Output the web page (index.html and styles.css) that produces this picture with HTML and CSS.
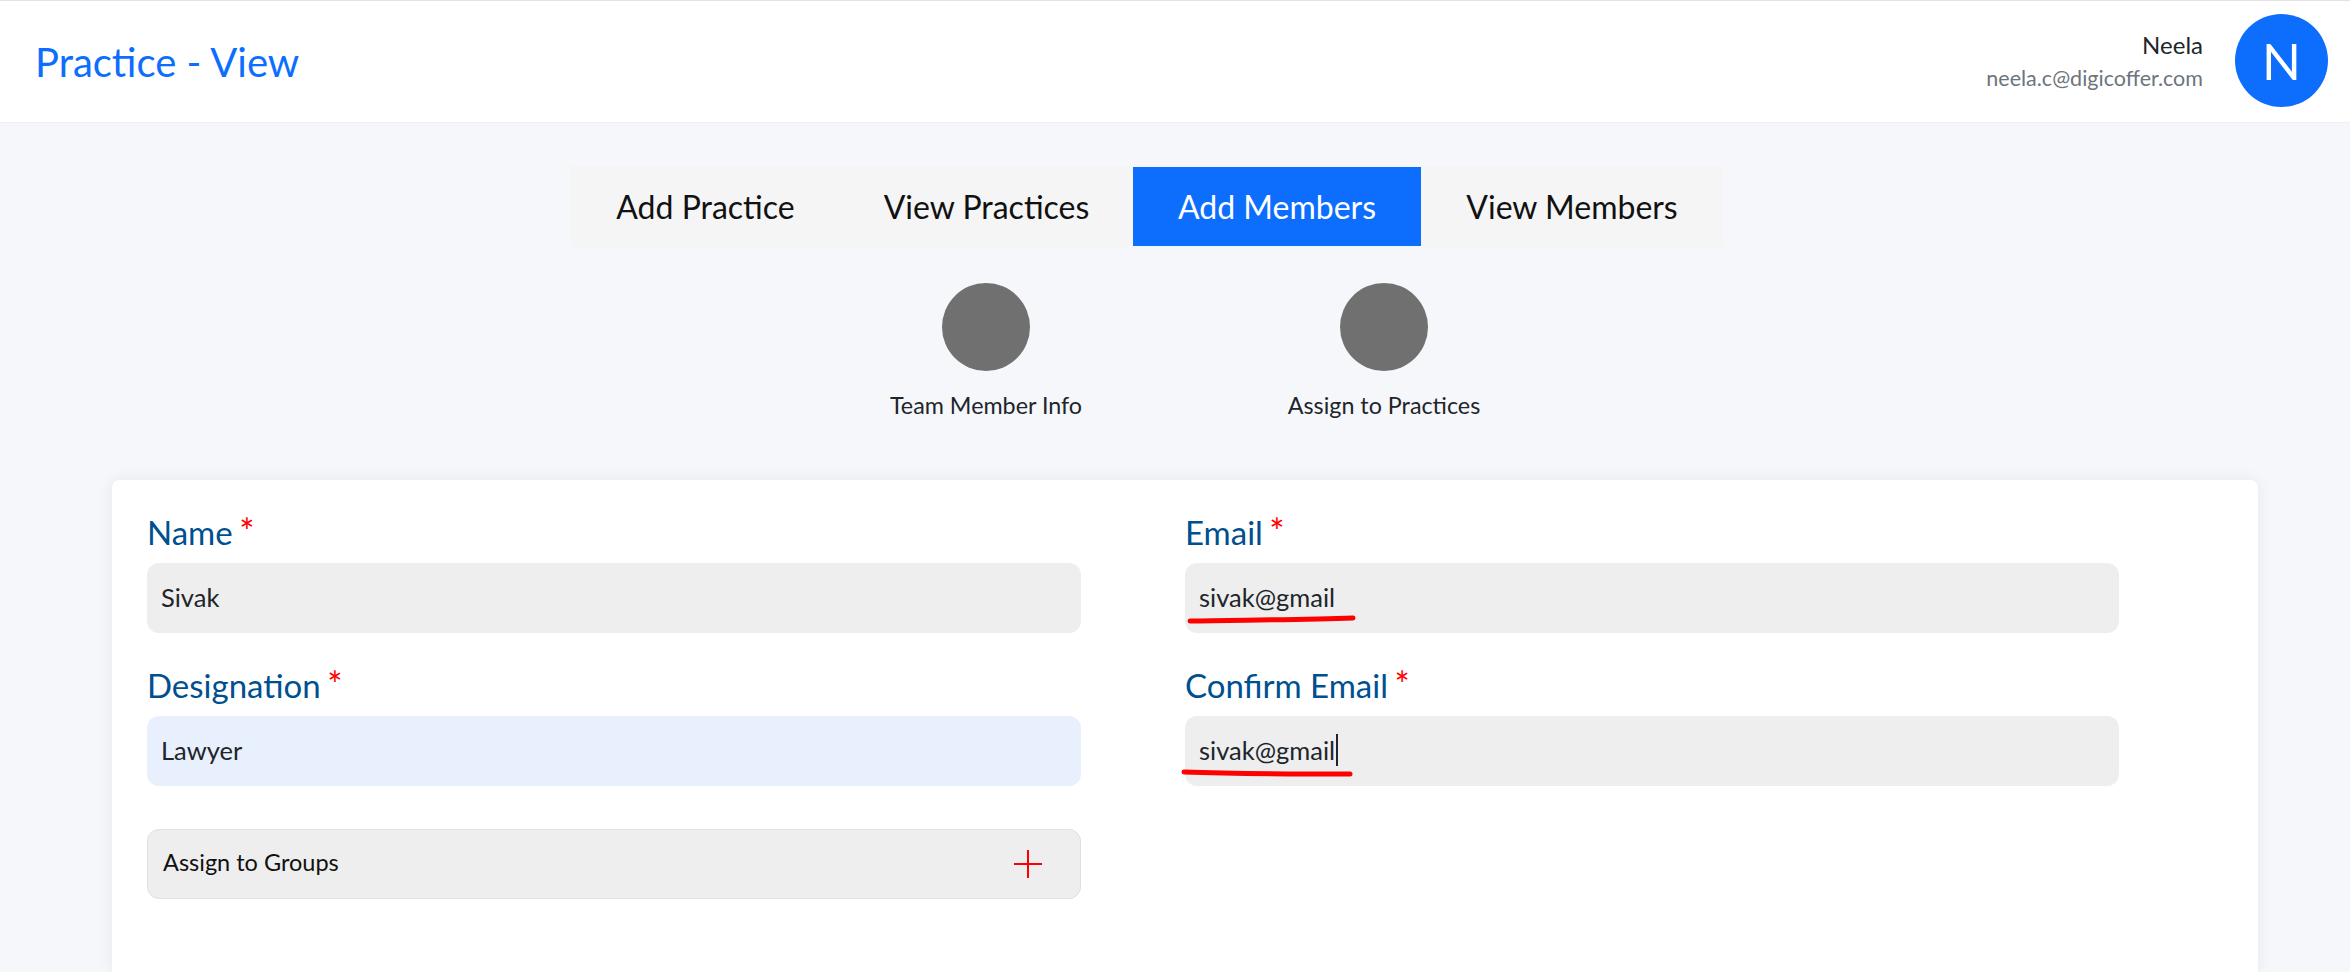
FILE: index.html
```html
<!DOCTYPE html>
<html lang="en">
<head>
<meta charset="utf-8">
<title>Practice - View</title>
<link rel="stylesheet" href="styles.css">
</head>
<body>
<header class="topbar">
  <h1 class="title">Practice - View</h1>
  <div class="user">
    <div class="user-text">
      <div class="user-name">Neela</div>
      <div class="user-mail">neela.c@digicoffer.com</div>
    </div>
    <div class="avatar">N</div>
  </div>
</header>
<main class="page">
  <nav class="tabs">
    <a class="tab">Add Practice</a>
    <a class="tab">View Practices</a>
    <a class="tab tab-active">Add Members</a>
    <a class="tab">View Members</a>
  </nav>
  <div class="steps">
    <div class="step"><span class="step-dot"></span><span class="step-label">Team Member Info</span></div>
    <div class="step"><span class="step-dot"></span><span class="step-label">Assign to Practices</span></div>
  </div>
  <section class="card">
    <div class="form-grid">
      <div class="field">
        <label class="label">Name <span class="req">*</span></label>
        <div class="input">Sivak</div>
      </div>
      <div class="field">
        <label class="label">Email <span class="req">*</span></label>
        <div class="input">sivak@gmail</div>
      </div>
      <div class="field">
        <label class="label">Designation <span class="req">*</span></label>
        <div class="input input-filled">Lawyer</div>
      </div>
      <div class="field">
        <label class="label">Confirm Email <span class="req">*</span></label>
        <div class="input">sivak@gmail<span class="caret"></span></div>
      </div>
      <div class="assign">
        <span class="assign-text">Assign to Groups</span>
        <svg class="plus" width="28" height="28" viewBox="0 0 28 28"><path d="M14 0V28M0 14H28" stroke="#f00" stroke-width="2" fill="none"/></svg>
      </div>
    </div>
  </section>
</main>
<svg class="scribble" width="2350" height="972" viewBox="0 0 2350 972">
  <path d="M1190 621 C1240 620 1300 620 1353 618" stroke="#f00" stroke-width="5" stroke-linecap="round" fill="none"/>
  <path d="M1184 772 C1240 774 1300 774 1350 774" stroke="#f00" stroke-width="5" stroke-linecap="round" fill="none"/>
</svg>
</body>
</html>
```
FILE: styles.css
```css
* { box-sizing: border-box; }
html, body { margin: 0; height: 100%; }
body {
  position: relative;
  height: 972px;
  overflow: hidden;
  background: #f5f7fb;
  font-family: "Lato", "Noto Sans", sans-serif;
  color: #212529;
}
.topbar {
  height: 123px;
  background: #fff;
  border-top: 1px solid #e3e3e3;
  border-bottom: 1px solid #f0f0f0;
  display: flex;
  align-items: center;
  justify-content: space-between;
  padding: 0 22px 0 35px;
}
.title { margin: 0; font-size: 40px; font-weight: 400; color: #0d6efd; }
.user { display: flex; align-items: center; gap: 32px; margin-bottom: 2px; }
.user-text { text-align: right; }
.user-name { font-size: 24px; line-height: 34px; color: #212529; }
.user-mail { font-size: 21.5px; line-height: 32px; color: #6c757d; }
.avatar {
  width: 93px; height: 93px; border-radius: 50%;
  background: #0d6efd; color: #fff;
  display: flex; align-items: center; justify-content: center;
  font-size: 51px; font-weight: 400;
}
.page { padding-top: 43px; }
.tabs {
  display: grid;
  grid-template-columns: 269px 293px 288px 302px;
  width: 1152px;
  height: 81px;
  margin-left: 571px;
  background: #f5f5f5;
}
.tab {
  display: flex; align-items: center; justify-content: center;
  font-size: 32px; color: #111;
}
.tab-active { background: #0d6efd; color: #fff; margin: 1px 0; }
.steps {
  display: grid;
  grid-template-columns: 398px 398px;
  justify-content: center;
  margin: 36px 0 0 20px;
  height: 197px;
}
.step { display: flex; flex-direction: column; align-items: center; }
.step-dot { width: 88px; height: 88px; border-radius: 50%; background: #707070; }
.step-label { margin-top: 18px; font-size: 23.3px; line-height: 32px; color: #212529; }
.card {
  margin: 0 92px 0 112px;
  height: 492px;
  background: #fff;
  border-radius: 8px 8px 0 0;
  box-shadow: 0 0 16px rgba(0, 0, 0, .07);
  padding: 28px 139px 0 35px;
}
.form-grid {
  display: grid;
  grid-template-columns: 934px 934px;
  column-gap: 104px;
  row-gap: 28px;
  align-items: start;
}
.label { display: block; height: 55px; font-size: 33px; line-height: 49px; color: #00508f; }
.req { color: #f00; font-size: 36px; line-height: 0; margin-left: -2px; }
.input {
  height: 70px;
  background: #eee;
  border-radius: 12px;
  padding: 0 14px 2px;
  display: flex; align-items: center;
  font-size: 25.5px; color: #212529;
}
.input-filled { background: #e8f0fe; }
.caret { width: 2px; height: 32px; background: #212529; margin-left: 1px; }
.assign {
  margin-top: 15px;
  height: 70px;
  background: #eee;
  border: 1px solid #e0e0e4;
  border-radius: 12px;
  padding: 0 38px 0 15px;
  display: flex; align-items: center; justify-content: space-between;
  font-size: 23.5px; color: #111;
}
.assign-text { margin-top: -4px; }
.scribble { position: absolute; left: 0; top: 0; pointer-events: none; }
```
